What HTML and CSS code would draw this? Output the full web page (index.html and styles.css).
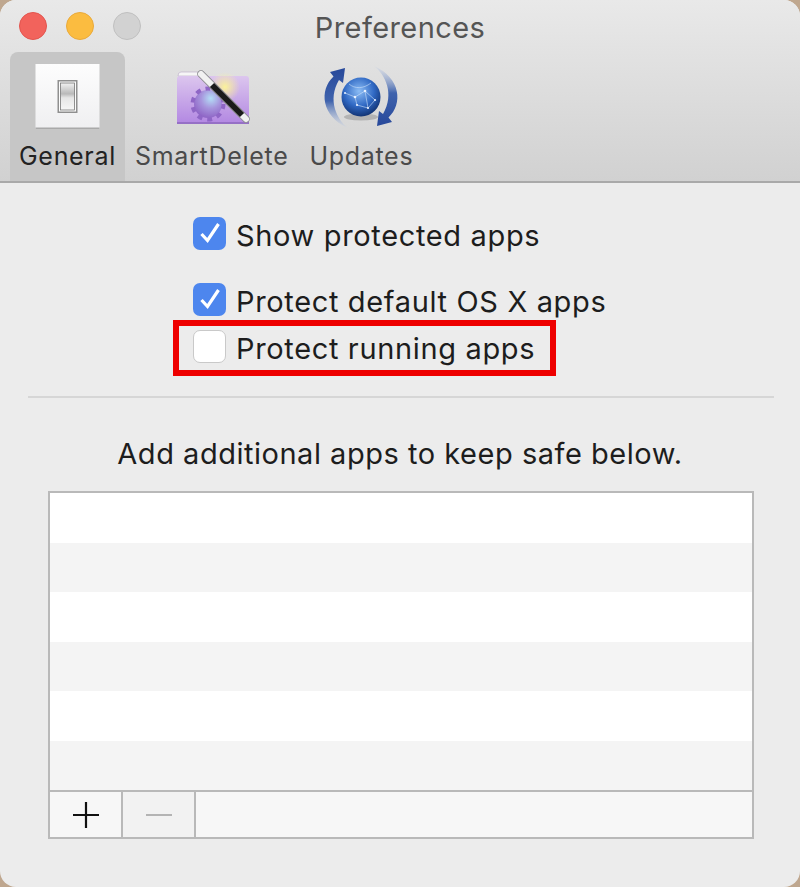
FILE: index.html
```html
<!DOCTYPE html>
<html lang="en">
<head>
    <meta charset="UTF-8">
    <title>Preferences</title>
    <link rel="stylesheet" href="styles.css">
</head>
<body>
    <div class="window">
        <header class="toolbar">
            <div class="titlebar">
                <div class="lights">
                    <span class="light red"></span>
                    <span class="light yellow"></span>
                    <span class="light gray"></span>
                </div>
                <div class="title">Preferences</div>
                <div></div>
            </div>
            <nav class="tabs">
                <div class="tab active">
                    <svg class="tab-icon" viewBox="0 0 96 70" width="96" height="70">
                        <defs>
                            <linearGradient id="plate" x1="0" y1="0" x2="0" y2="1">
                                <stop offset="0" stop-color="#fdfdfd"/>
                                <stop offset="1" stop-color="#efeff1"/>
                            </linearGradient>
                            <linearGradient id="rocker" x1="0" y1="0" x2="0" y2="1">
                                <stop offset="0" stop-color="#f2f2f2"/>
                                <stop offset="0.4" stop-color="#b9b9b9"/>
                                <stop offset="0.55" stop-color="#e6e6e6"/>
                                <stop offset="1" stop-color="#f6f6f6"/>
                            </linearGradient>
                        </defs>
                        <rect x="15.5" y="2" width="64" height="65" fill="url(#plate)"/>
                        <rect x="15.5" y="65.5" width="64" height="1.5" fill="#a9a9a9"/>
                        <rect x="37.5" y="18" width="20" height="33" fill="#8f8f8f"/>
                        <rect x="39" y="19.5" width="17" height="30" fill="#fbfbfb"/>
                        <rect x="40.5" y="21" width="14" height="27" fill="url(#rocker)" stroke="#777" stroke-width="0.8"/>
                    </svg>
                    <span>General</span>
                </div>
                <div class="tab">
                    <svg class="tab-icon" viewBox="0 0 96 70" width="96" height="70">
                        <defs>
                            <linearGradient id="folder" x1="0" y1="0" x2="0" y2="1">
                                <stop offset="0" stop-color="#dcc6ee"/>
                                <stop offset="1" stop-color="#b287e2"/>
                            </linearGradient>
                            <radialGradient id="shine" cx="0.5" cy="0.5" r="0.5">
                                <stop offset="0" stop-color="#fbf29a"/>
                                <stop offset="1" stop-color="#fbf29a" stop-opacity="0"/>
                            </radialGradient>
                            <radialGradient id="gearfill" cx="0.6" cy="0.3" r="0.7">
                                <stop offset="0" stop-color="#b4def6"/>
                                <stop offset="0.5" stop-color="#a795dd"/>
                                <stop offset="1" stop-color="#8f66c6"/>
                            </radialGradient>
                            <filter id="soft"><feGaussianBlur stdDeviation="0.6"/></filter>
                        </defs>
                        <g filter="url(#soft)">
                            <path d="M14 14 q0 -4 3 -4 h17 l3 4z" fill="#f6f6f6" stroke="#b9a9c6" stroke-width="0.6"/>
                            <path d="M13 17 q0 -3 3 -3 h66 q3 0 3 3 v45 h-72z" fill="url(#folder)"/>
                            <rect x="13" y="60" width="72" height="2" fill="#9670c6"/>
                            <circle cx="61" cy="25" r="15" fill="url(#shine)"/>
                            <circle cx="44" cy="42" r="14" fill="url(#gearfill)"/>
                            <circle cx="44" cy="42" r="15.5" fill="none" stroke="#8f66c6" stroke-width="4" stroke-dasharray="5 5"/>
                        </g>
                        <line x1="37" y1="12" x2="82" y2="57" stroke="#8e8e92" stroke-width="7.5" stroke-linecap="round"/>
                        <line x1="37" y1="12" x2="82" y2="57" stroke="#f1f1f1" stroke-width="6" stroke-linecap="round"/>
                        <line x1="48" y1="23" x2="78" y2="53" stroke="#1a1a1a" stroke-width="6"/>
                    </svg>
                    <span>SmartDelete</span>
                </div>
                <div class="tab last">
                    <svg class="tab-icon" viewBox="0 0 96 70" width="96" height="70">
                        <defs>
                            <radialGradient id="globe" cx="0.45" cy="0.35" r="0.7">
                                <stop offset="0" stop-color="#8cbdf5"/>
                                <stop offset="0.55" stop-color="#3069c4"/>
                                <stop offset="1" stop-color="#0d2a66"/>
                            </radialGradient>
                            <linearGradient id="arrowleft" x1="0" y1="0" x2="0" y2="1">
                                <stop offset="0" stop-color="#27489a"/>
                                <stop offset="0.55" stop-color="#3f63ad"/>
                                <stop offset="1" stop-color="#c9d3e6" stop-opacity="0.3"/>
                            </linearGradient>
                            <linearGradient id="arrowright" x1="0" y1="1" x2="0" y2="0">
                                <stop offset="0" stop-color="#27489a"/>
                                <stop offset="0.55" stop-color="#3f63ad"/>
                                <stop offset="1" stop-color="#c9d3e6" stop-opacity="0.3"/>
                            </linearGradient>
                        </defs>
                        <path d="M32 6 L17 10 L20.5 14.5 C6 28 8 54 35 66 C24 58 14 38 26 18 L30 21z" fill="url(#arrowleft)"/>
                        <path d="M64 64 L79 60 L75.5 55.5 C90 42 88 16 61 4 C72 12 82 32 70 52 L66 49z" fill="url(#arrowright)"/>
                        <ellipse cx="48" cy="55" rx="17" ry="3.5" fill="#7b7b7b" opacity="0.4"/>
                        <circle cx="48" cy="35" r="19.5" fill="url(#globe)"/>
                        <g stroke="#cfe2fb" stroke-width="0.7" fill="none" opacity="0.85">
                            <path d="M32 31 L42 35 L52 29 L62 38 L55 46 L44 43 L42 35"/>
                            <path d="M36 22 C42 27 50 27 58 21"/>
                            <path d="M52 29 L55 46"/>
                        </g>
                        <g fill="#e8f1ff">
                            <circle cx="42" cy="35" r="1.3"/>
                            <circle cx="52" cy="29" r="1.3"/>
                            <circle cx="62" cy="38" r="1.1"/>
                            <circle cx="55" cy="46" r="1.1"/>
                            <circle cx="44" cy="43" r="1.1"/>
                            <circle cx="32" cy="31" r="1"/>
                        </g>
                    </svg>
                    <span>Updates</span>
                </div>
            </nav>
        </header>

        <main class="content">
            <div class="options">
                <div class="option first">
                    <span class="check on">
                        <svg viewBox="0 0 33 33" width="33" height="33"><path d="M8.5 17 L14.5 23.5 L25.5 7" fill="none" stroke="#fff" stroke-width="3.2"/></svg>
                    </span>
                    <span class="label">Show protected apps</span>
                </div>
                <div class="option second">
                    <span class="check on">
                        <svg viewBox="0 0 33 33" width="33" height="33"><path d="M8.5 17 L14.5 23.5 L25.5 7" fill="none" stroke="#fff" stroke-width="3.2"/></svg>
                    </span>
                    <span class="label">Protect default OS X apps</span>
                </div>
                <div class="option third">
                    <span class="check"></span>
                    <span class="label">Protect running apps</span>
                    <span class="highlight"></span>
                </div>
            </div>

            <hr class="separator">

            <p class="hint">Add additional apps to keep safe below.</p>

            <div class="list">
                <div class="row"></div>
                <div class="row"></div>
                <div class="row"></div>
                <div class="row"></div>
                <div class="row"></div>
                <div class="row"></div>
                <div class="list-bar">
                    <div class="bar-button">
                        <svg viewBox="0 0 28 28" width="28" height="28"><path d="M1 14 H27 M14 1 V27" stroke="#111" stroke-width="2.2"/></svg>
                    </div>
                    <div class="bar-button disabled">
                        <svg viewBox="0 0 28 28" width="28" height="28"><path d="M1 14 H27" stroke="#b4b4b4" stroke-width="2.2"/></svg>
                    </div>
                    <div class="bar-fill"></div>
                </div>
            </div>
        </main>
    </div>
</body>
</html>
```

FILE: styles.css
```css
html, body {
    margin: 0;
    height: 100%;
    background: #bfa78f;
}
body {
    font-family: Inter, "Liberation Sans", sans-serif;
    color: #1d1d1d;
    overflow: hidden;
}
.window {
    height: 887px;
    border-radius: 16px;
    overflow: hidden;
    background: #ececec;
    display: flex;
    flex-direction: column;
}

/* toolbar */
.toolbar {
    height: 183px;
    box-sizing: border-box;
    border-bottom: 2px solid #a9a9a9;
    background: linear-gradient(#e9e9e9, #d1d1d1);
}
.titlebar {
    height: 52px;
    display: grid;
    grid-template-columns: 1fr auto 1fr;
    align-items: center;
}
.lights {
    display: flex;
    gap: 19px;
    padding-left: 19px;
}
.light {
    width: 26px;
    height: 26px;
    border: 1px solid transparent;
    border-radius: 50%;
}
.light.red { background: #f2635c; border-color: #e2544e; }
.light.yellow { background: #fbbc40; border-color: #e9a93a; }
.light.gray { background: #d2d2d2; border-color: #bfbfbf; }
.title {
    padding-top: 2px;
    font-size: 29px;
    color: #555;
    letter-spacing: 0.4px;
}
.tabs {
    display: flex;
    height: 129px;
    padding-left: 10px;
}
.tab {
    display: flex;
    flex-direction: column;
    align-items: center;
    padding: 10px 10px 0;
    font-size: 25px;
    letter-spacing: 0.7px;
    color: #4a4a4a;
    border-radius: 8px 8px 0 0;
}
.tab.active {
    width: 115px;
    box-sizing: border-box;
    padding: 10px 0 0;
    background: #c6c6c6;
    color: #222;
}
.tab.last {
    margin-left: 1px;
}
.tab-icon {
    display: block;
    margin-bottom: 9px;
}

/* checkboxes */
.content {
    flex: 1;
    padding: 0 26px;
}
.options {
    padding-left: 167px;
}
.option {
    position: relative;
    width: fit-content;
    display: flex;
    align-items: center;
    gap: 10px;
    height: 33px;
    font-size: 29px;
    letter-spacing: 0.65px;
}
.option.first { margin-top: 34px; }
.option.second { margin-top: 33px; }
.option.third { margin-top: 14px; }
.label {
    padding-top: 3px;
}
.check {
    width: 33px;
    height: 33px;
    box-sizing: border-box;
    border-radius: 7px;
    background: #fff;
    border: 1px solid #c9c9c9;
}
.check.on {
    background: #4d86ee;
    border: 0;
}
.check svg {
    display: block;
}
.highlight {
    position: absolute;
    top: -10px;
    bottom: -13px;
    left: -20px;
    right: -21px;
    border: 6px solid #ee0000;
}
.separator {
    margin: 33px 0 0 2px;
    width: 746px;
    height: 2px;
    border: 0;
    background: #d6d6d6;
}

/* app list */
.hint {
    margin: 37px 0 18px;
    text-align: center;
    font-size: 29px;
    line-height: 38px;
    letter-spacing: 0.52px;
}
.list {
    margin-left: 22px;
    width: 706px;
    height: 348px;
    box-sizing: border-box;
    border: 2px solid #b9b9b9;
    display: flex;
    flex-direction: column;
}
.row {
    height: 49.5px;
    background: #fff;
}
.row:nth-child(even) {
    background: #f4f4f4;
}
.list-bar {
    flex: 1;
    display: flex;
    border-top: 2px solid #b9b9b9;
    background: #f7f7f7;
}
.bar-button {
    width: 71px;
    flex: none;
    border-right: 2px solid #b9b9b9;
    display: flex;
    align-items: center;
    justify-content: center;
}
.bar-button.disabled {
    background: #f2f2f2;
}
.bar-fill {
    flex: 1;
}
```
